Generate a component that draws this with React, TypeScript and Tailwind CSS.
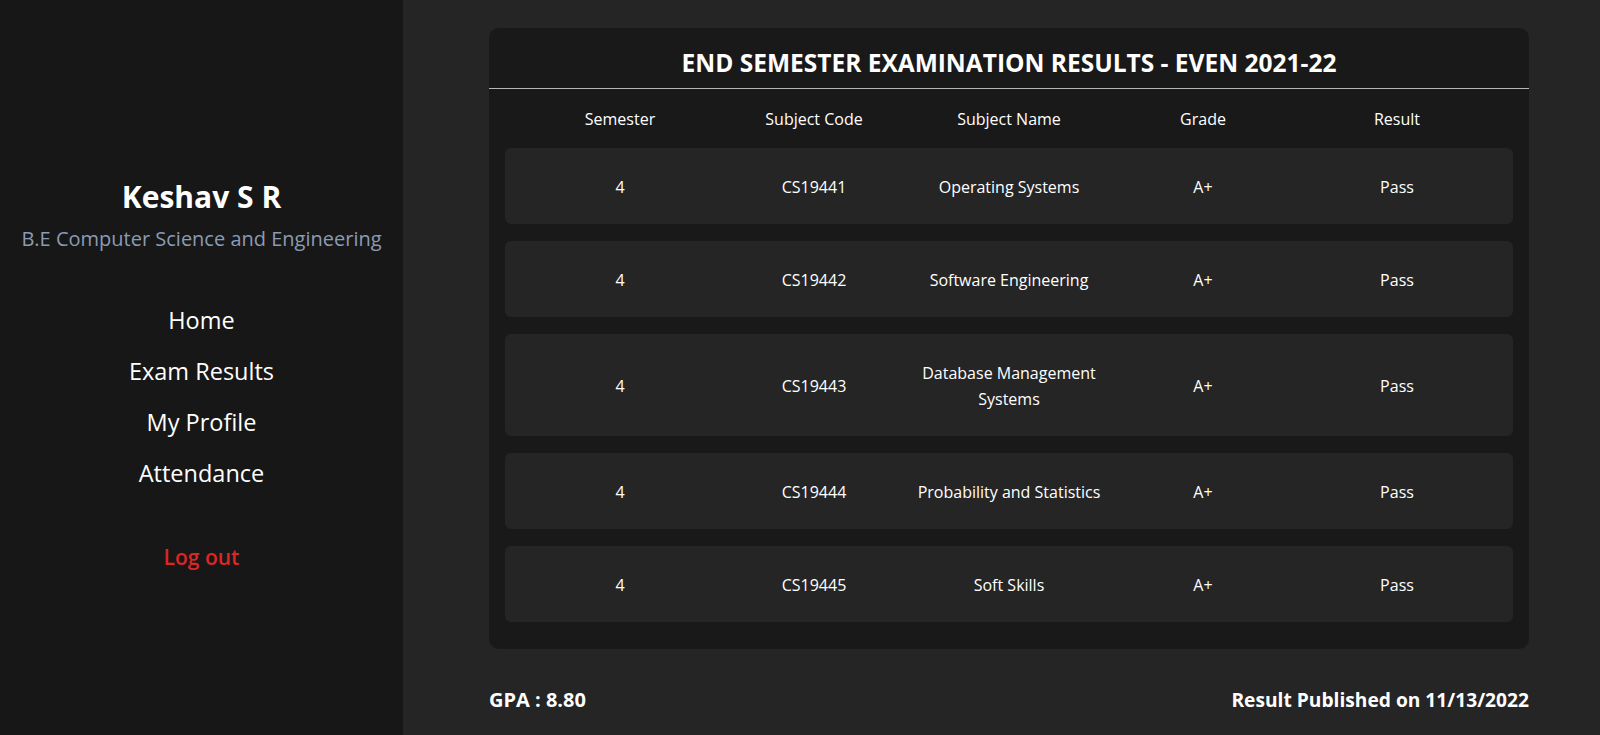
import React from "react";

const rows = [
  { sem: "4", code: "CS19441", name: "Operating Systems", grade: "A+", result: "Pass" },
  { sem: "4", code: "CS19442", name: "Software Engineering", grade: "A+", result: "Pass" },
  { sem: "4", code: "CS19443", name: "Database Management Systems", grade: "A+", result: "Pass" },
  { sem: "4", code: "CS19444", name: "Probability and Statistics", grade: "A+", result: "Pass" },
  { sem: "4", code: "CS19445", name: "Soft Skills", grade: "A+", result: "Pass" },
];

const grid = "grid grid-cols-[230px_158px_232px_156px_232px] items-center text-center";

export default function App() {
  return (
    <div
      className="flex w-full h-[735px] overflow-hidden text-white"
      style={{ fontFamily: '"Open Sans", "Noto Sans", sans-serif' }}
    >
      <aside className="w-[403px] shrink-0 bg-[#171717] flex flex-col items-center pt-[175px]">
        <h1 className="text-[30px] font-bold leading-[44px]">Keshav S R</h1>
        <p className="text-[20px] text-[#8b9bb4] leading-[28px] mt-[6px]">
          B.E Computer Science and Engineering
        </p>
        <nav className="flex flex-col items-center mt-[42px] text-[23.5px] leading-[51px]">
          <a>Home</a>
          <a>Exam Results</a>
          <a>My Profile</a>
          <a>Attendance</a>
        </nav>
        <button className="mt-[44px] text-[21px] font-semibold text-[#dc2626] leading-[28px]">
          Log out
        </button>
      </aside>
      <main className="flex-1 bg-[#252525] pl-[86px] pr-[71px] pt-[28px]">
        <div className="bg-[#191919] rounded-[10px] pb-[27px]">
          <h2 className="text-[24.5px] font-bold text-center leading-[60px] h-[60px] pt-[5px]">
            END SEMESTER EXAMINATION RESULTS - EVEN 2021-22
          </h2>
          <div className="h-px bg-[#b5b5b5]" />
          <div className="px-[16px]">
            <div className={`${grid} h-[59px] text-[16px]`}>
              <div>Semester</div>
              <div>Subject Code</div>
              <div>Subject Name</div>
              <div>Grade</div>
              <div>Result</div>
            </div>
            <div className="flex flex-col gap-[17px]">
              {rows.map((r) => (
                <div
                  key={r.code}
                  className={`${grid} bg-[#252525] rounded-[6px] pt-[26px] pb-[24px] text-[16px] leading-[26px]`}
                >
                  <div>{r.sem}</div>
                  <div>{r.code}</div>
                  <div className="mx-auto max-w-[220px]">{r.name}</div>
                  <div>{r.grade}</div>
                  <div>{r.result}</div>
                </div>
              ))}
            </div>
          </div>
        </div>
        <div className="flex justify-between items-center mt-[36px] font-bold leading-[30px]">
          <span className="text-[20px]">GPA : 8.80</span>
          <span className="text-[19.2px]">Result Published on 11/13/2022</span>
        </div>
      </main>
    </div>
  );
}
